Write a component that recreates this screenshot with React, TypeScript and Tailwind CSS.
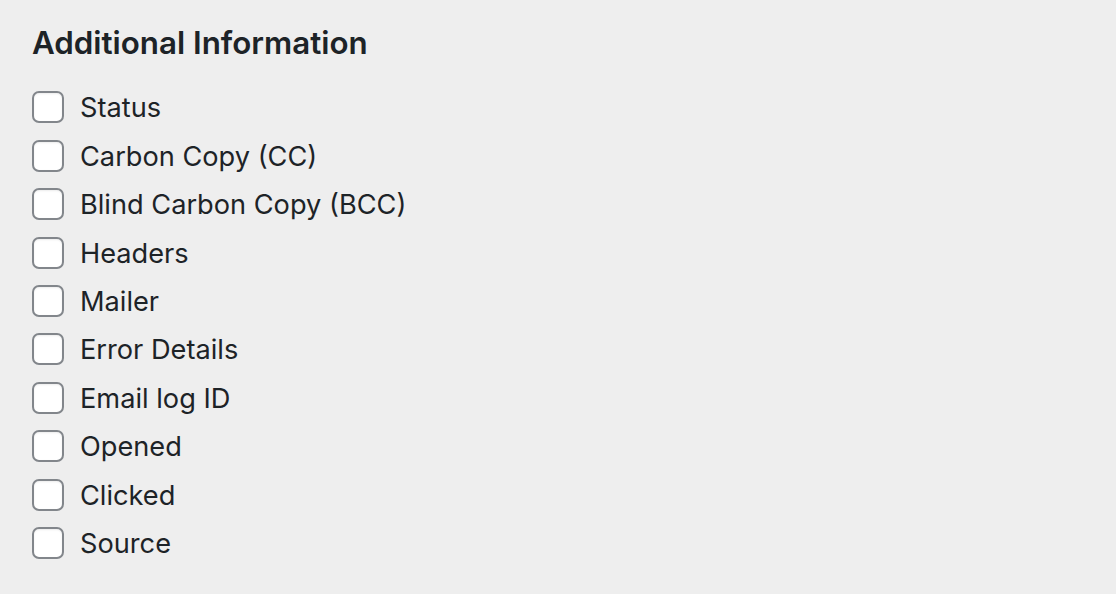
import React from "react";

const items = [
  "Status",
  "Carbon Copy (CC)",
  "Blind Carbon Copy (BCC)",
  "Headers",
  "Mailer",
  "Error Details",
  "Email log ID",
  "Opened",
  "Clicked",
  "Source",
];

export default function App() {
  return (
    <div
      className="w-[1116px] h-[594px] bg-[#eeeeee] text-[#1d2327] pl-[32px] pt-[24px]"
      style={{ fontFamily: '"Inter", "Liberation Sans", sans-serif' }}
    >
      <h2 className="text-[31.3px] leading-[38px] font-semibold">Additional Information</h2>
      <div className="mt-[21px] flex flex-col">
        {items.map((label) => (
          <label key={label} className="flex items-center h-[48.44px]">
            <span className="w-[32px] h-[32px] rounded-[7px] border-2 border-[#82868b] bg-white shadow-[inset_0_1px_2px_rgba(0,0,0,0.08)] shrink-0" />
            <span className="ml-[16px] text-[27.2px] leading-[32px] pt-[2px]">{label}</span>
          </label>
        ))}
      </div>
    </div>
  );
}
